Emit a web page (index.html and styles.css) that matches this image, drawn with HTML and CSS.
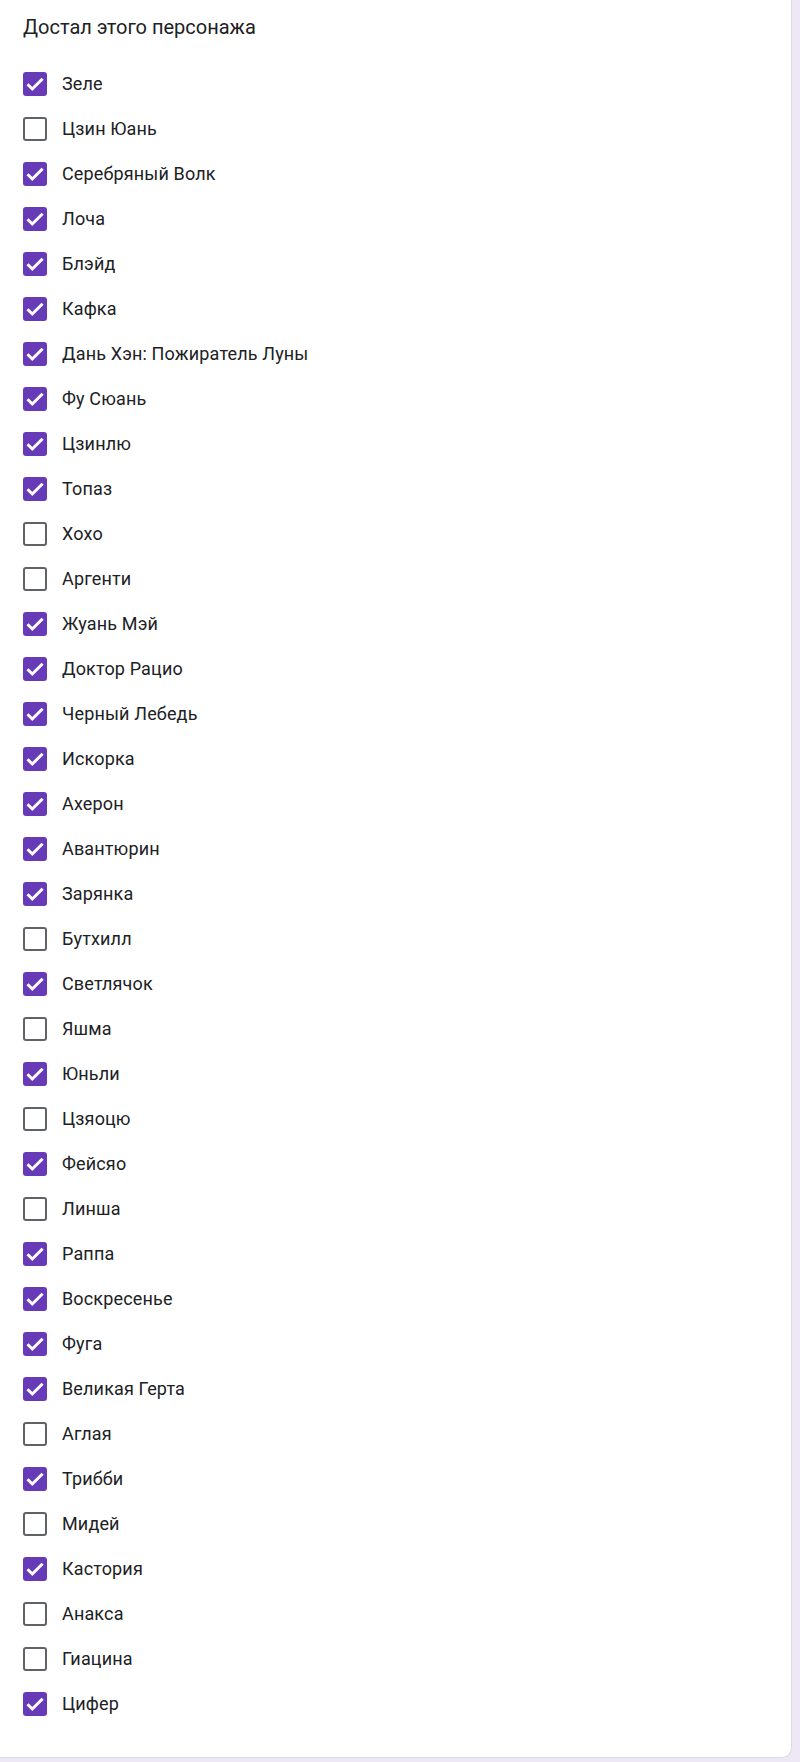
FILE: index.html
```html
<!DOCTYPE html>
<html lang="ru">
<head>
<meta charset="utf-8">
<title>Достал этого персонажа</title>
<link rel="stylesheet" href="styles.css">
</head>
<body>
<div class="card">
  <div class="title">Достал этого персонажа</div>
  <div class="list">
    <label class="opt"><span class="box on"><svg viewBox="0 0 24 24"><path d="M4.5 12.2 9.3 17 19.6 6.7"/></svg></span><span class="txt">Зеле</span></label>
    <label class="opt"><span class="box"></span><span class="txt">Цзин Юань</span></label>
    <label class="opt"><span class="box on"><svg viewBox="0 0 24 24"><path d="M4.5 12.2 9.3 17 19.6 6.7"/></svg></span><span class="txt">Серебряный Волк</span></label>
    <label class="opt"><span class="box on"><svg viewBox="0 0 24 24"><path d="M4.5 12.2 9.3 17 19.6 6.7"/></svg></span><span class="txt">Лоча</span></label>
    <label class="opt"><span class="box on"><svg viewBox="0 0 24 24"><path d="M4.5 12.2 9.3 17 19.6 6.7"/></svg></span><span class="txt">Блэйд</span></label>
    <label class="opt"><span class="box on"><svg viewBox="0 0 24 24"><path d="M4.5 12.2 9.3 17 19.6 6.7"/></svg></span><span class="txt">Кафка</span></label>
    <label class="opt"><span class="box on"><svg viewBox="0 0 24 24"><path d="M4.5 12.2 9.3 17 19.6 6.7"/></svg></span><span class="txt">Дань Хэн: Пожиратель Луны</span></label>
    <label class="opt"><span class="box on"><svg viewBox="0 0 24 24"><path d="M4.5 12.2 9.3 17 19.6 6.7"/></svg></span><span class="txt">Фу Сюань</span></label>
    <label class="opt"><span class="box on"><svg viewBox="0 0 24 24"><path d="M4.5 12.2 9.3 17 19.6 6.7"/></svg></span><span class="txt">Цзинлю</span></label>
    <label class="opt"><span class="box on"><svg viewBox="0 0 24 24"><path d="M4.5 12.2 9.3 17 19.6 6.7"/></svg></span><span class="txt">Топаз</span></label>
    <label class="opt"><span class="box"></span><span class="txt">Хохо</span></label>
    <label class="opt"><span class="box"></span><span class="txt">Аргенти</span></label>
    <label class="opt"><span class="box on"><svg viewBox="0 0 24 24"><path d="M4.5 12.2 9.3 17 19.6 6.7"/></svg></span><span class="txt">Жуань Мэй</span></label>
    <label class="opt"><span class="box on"><svg viewBox="0 0 24 24"><path d="M4.5 12.2 9.3 17 19.6 6.7"/></svg></span><span class="txt">Доктор Рацио</span></label>
    <label class="opt"><span class="box on"><svg viewBox="0 0 24 24"><path d="M4.5 12.2 9.3 17 19.6 6.7"/></svg></span><span class="txt">Черный Лебедь</span></label>
    <label class="opt"><span class="box on"><svg viewBox="0 0 24 24"><path d="M4.5 12.2 9.3 17 19.6 6.7"/></svg></span><span class="txt">Искорка</span></label>
    <label class="opt"><span class="box on"><svg viewBox="0 0 24 24"><path d="M4.5 12.2 9.3 17 19.6 6.7"/></svg></span><span class="txt">Ахерон</span></label>
    <label class="opt"><span class="box on"><svg viewBox="0 0 24 24"><path d="M4.5 12.2 9.3 17 19.6 6.7"/></svg></span><span class="txt">Авантюрин</span></label>
    <label class="opt"><span class="box on"><svg viewBox="0 0 24 24"><path d="M4.5 12.2 9.3 17 19.6 6.7"/></svg></span><span class="txt">Зарянка</span></label>
    <label class="opt"><span class="box"></span><span class="txt">Бутхилл</span></label>
    <label class="opt"><span class="box on"><svg viewBox="0 0 24 24"><path d="M4.5 12.2 9.3 17 19.6 6.7"/></svg></span><span class="txt">Светлячок</span></label>
    <label class="opt"><span class="box"></span><span class="txt">Яшма</span></label>
    <label class="opt"><span class="box on"><svg viewBox="0 0 24 24"><path d="M4.5 12.2 9.3 17 19.6 6.7"/></svg></span><span class="txt">Юньли</span></label>
    <label class="opt"><span class="box"></span><span class="txt">Цзяоцю</span></label>
    <label class="opt"><span class="box on"><svg viewBox="0 0 24 24"><path d="M4.5 12.2 9.3 17 19.6 6.7"/></svg></span><span class="txt">Фейсяо</span></label>
    <label class="opt"><span class="box"></span><span class="txt">Линша</span></label>
    <label class="opt"><span class="box on"><svg viewBox="0 0 24 24"><path d="M4.5 12.2 9.3 17 19.6 6.7"/></svg></span><span class="txt">Раппа</span></label>
    <label class="opt"><span class="box on"><svg viewBox="0 0 24 24"><path d="M4.5 12.2 9.3 17 19.6 6.7"/></svg></span><span class="txt">Воскресенье</span></label>
    <label class="opt"><span class="box on"><svg viewBox="0 0 24 24"><path d="M4.5 12.2 9.3 17 19.6 6.7"/></svg></span><span class="txt">Фуга</span></label>
    <label class="opt"><span class="box on"><svg viewBox="0 0 24 24"><path d="M4.5 12.2 9.3 17 19.6 6.7"/></svg></span><span class="txt">Великая Герта</span></label>
    <label class="opt"><span class="box"></span><span class="txt">Аглая</span></label>
    <label class="opt"><span class="box on"><svg viewBox="0 0 24 24"><path d="M4.5 12.2 9.3 17 19.6 6.7"/></svg></span><span class="txt">Трибби</span></label>
    <label class="opt"><span class="box"></span><span class="txt">Мидей</span></label>
    <label class="opt"><span class="box on"><svg viewBox="0 0 24 24"><path d="M4.5 12.2 9.3 17 19.6 6.7"/></svg></span><span class="txt">Кастория</span></label>
    <label class="opt"><span class="box"></span><span class="txt">Анакса</span></label>
    <label class="opt"><span class="box"></span><span class="txt">Гиацина</span></label>
    <label class="opt"><span class="box on"><svg viewBox="0 0 24 24"><path d="M4.5 12.2 9.3 17 19.6 6.7"/></svg></span><span class="txt">Цифер</span></label>
  </div>
</div>
</body>
</html>
```
FILE: styles.css
```css
html, body {
  margin: 0;
  padding: 0;
}
body {
  background: #ede7f6;
  font-family: Roboto, "Noto Sans", Arial, sans-serif;
  color: #202124;
}
.card {
  box-sizing: border-box;
  width: 792px;
  height: 1758px;
  background: #fff;
  border-right: 1px solid #dadce0;
  border-bottom: 1px solid #dadce0;
  border-bottom-right-radius: 10px;
  padding: 15px 0 0 23px;
}
.title {
  font-size: 20px;
  line-height: 24px;
  letter-spacing: 0;
  color: #202124;
}
.list {
  margin-top: 33px;
  display: flex;
  flex-direction: column;
  gap: 21px;
}
.opt {
  display: flex;
  align-items: center;
  height: 24px;
}
.box {
  box-sizing: border-box;
  width: 24px;
  height: 24px;
  border: 2.5px solid #5f6368;
  border-radius: 3px;
  flex: none;
  display: flex;
}
.box.on {
  background: #673ab7;
  border-color: #673ab7;
}
.box svg {
  width: 24px;
  height: 24px;
  margin: -2.5px;
  fill: none;
  stroke: #fff;
  stroke-width: 3;
}
.txt {
  margin-left: 15px;
  font-size: 18px;
  line-height: 24px;
  letter-spacing: 0.15px;
  color: #202124;
}
```
